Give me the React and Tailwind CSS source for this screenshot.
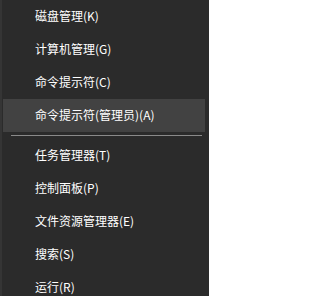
export default function App() {
  const top = ["磁盘管理(K)", "计算机管理(G)", "命令提示符(C)", "命令提示符(管理员)(A)"];
  const bottom = ["任务管理器(T)", "控制面板(P)", "文件资源管理器(E)", "搜索(S)", "运行(R)"];
  const font = { fontFamily: '"Noto Sans CJK SC", "Noto Sans", sans-serif' };
  return (
    <div className="w-[209px] h-[296px] bg-[#2b2b2b] overflow-hidden border-l-2 border-[#353535]" style={font}>
      <div className="flex flex-col pl-[1px] pr-[4px] -mt-[0.5px]">
        {top.map((t, i) => (
          <div
            key={t}
            className={`h-[33px] flex items-center pl-[32px] text-[12px] text-white ${i === 3 ? "bg-[#424242]" : ""}`}
          >
            {t}
          </div>
        ))}
        <div className="h-[7px] flex items-center pl-[8px] pr-[3px]">
          <div className="h-px w-full bg-[#8a8a8a]" />
        </div>
        {bottom.map((t) => (
          <div key={t} className="h-[33px] flex items-center pl-[32px] text-[12px] text-white">
            {t}
          </div>
        ))}
      </div>
    </div>
  );
}
